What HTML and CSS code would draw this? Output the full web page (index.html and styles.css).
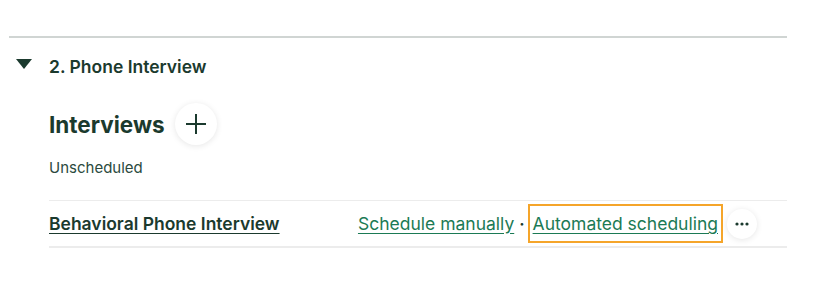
FILE: index.html
```html
<!DOCTYPE html>
<html>
<head>
<meta charset="utf-8">
<link rel="stylesheet" href="styles.css">
</head>
<body>
<div class="stage">
  <div class="divider"></div>
  <div class="stage-header">
    <span class="caret"></span>
    <span class="stage-title">2. Phone Interview</span>
  </div>
  <div class="stage-body">
    <div class="section-head">
      <h2 class="section-title">Interviews</h2>
      <button class="circle-btn add-btn" aria-label="Add interview">
        <svg width="20" height="20" viewBox="0 0 20 20"><path d="M10 0V20M0 10H20" stroke="#1b3a2e" stroke-width="2"/></svg>
      </button>
    </div>
    <div class="subhead">Unscheduled</div>
    <div class="row">
      <a class="row-title" href="#">Behavioral Phone Interview</a>
      <div class="actions">
        <a class="link" href="#">Schedule manually</a>
        <span class="sep">·</span>
        <a class="link focused" href="#">Automated scheduling</a>
        <button class="circle-btn more-btn" aria-label="More">
          <svg width="14" height="4" viewBox="0 0 14 4"><circle cx="2" cy="2" r="1.6" fill="#1b3a2e"/><circle cx="7" cy="2" r="1.6" fill="#1b3a2e"/><circle cx="12" cy="2" r="1.6" fill="#1b3a2e"/></svg>
        </button>
      </div>
    </div>
  </div>
</div>
</body>
</html>
```
FILE: styles.css
```css
html, body { margin: 0; padding: 0; background: #fff; }
body { font-family: Inter, "Noto Sans", sans-serif; color: #1b3a2e; }
.stage { padding: 36px 27px 0 9px; }
.divider { height: 2px; background: #d0d5d3; }
.stage-header { display: flex; align-items: center; height: 56px; }
.caret { width: 0; height: 0; border-left: 8px solid transparent; border-right: 8px solid transparent; border-top: 10px solid #1b3a2e; margin-left: 7px; margin-right: 17px; margin-top: -4px; }
.stage-title { font-size: 17.5px; font-weight: 600; }
.stage-body { padding-left: 40px; }
.section-head { display: flex; align-items: center; gap: 10px; margin-top: 10px; height: 40px; }
.section-title { margin: 0; font-size: 22.5px; font-weight: 700; }
.circle-btn { border: none; background: #fff; border-radius: 50%; display: flex; align-items: center; justify-content: center; padding: 0; box-shadow: 0 1px 6px rgba(0,0,0,0.10); cursor: pointer; }
.add-btn { width: 42px; height: 42px; }
.subhead { font-size: 15px; margin-top: 15px; line-height: 17px; color: #2b4a3e; }
.row { display: flex; align-items: center; justify-content: space-between; border-top: 1px solid #ececec; border-bottom: 2px solid #ececec; height: 45px; margin-top: 24px; }
.row-title { font-size: 17.5px; font-weight: 600; color: #1b3a2e; text-decoration: underline; text-underline-offset: 3px; }
.actions { display: flex; align-items: center; padding-right: 30px; }
.link { font-size: 17.5px; color: #1b7a55; text-decoration: underline; text-underline-offset: 3px; }
.sep { margin: 0 5px; font-size: 16px; color: #1b3a2e; font-weight: 700; }
.focused { outline: 2px solid #f5a52a; outline-offset: 0; padding: 7px 3px; }
.more-btn { width: 30px; height: 30px; margin-left: 6px; }
```
